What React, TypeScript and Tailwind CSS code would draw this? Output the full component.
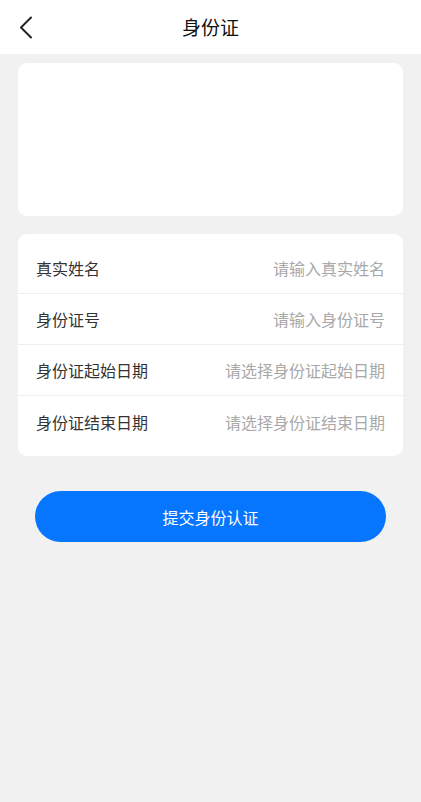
import React from 'react'

const ROWS: { label: string; placeholder: string }[] = [
  { label: '真实姓名', placeholder: '请输入真实姓名' },
  { label: '身份证号', placeholder: '请输入身份证号' },
  { label: '身份证起始日期', placeholder: '请选择身份证起始日期' },
  { label: '身份证结束日期', placeholder: '请选择身份证结束日期' },
]

const FONT = { fontFamily: '"Noto Sans CJK SC", "Noto Sans", sans-serif' }

export default function App() {
  return (
    <div className="min-h-[802px] w-full bg-[#f1f1f1]" style={FONT}>
      {/* Top bar */}
      <div className="relative flex h-[54px] items-center justify-center bg-white">
        <button className="absolute left-[16px] top-[14px] flex h-[26px] w-[20px] items-center justify-center" aria-label="返回">
          <svg width="14" height="23" viewBox="0 0 14 23" fill="none">
            <path d="M12 1.5L2 11.5L12 21.5" stroke="#222" strokeWidth="2" strokeLinecap="round" strokeLinejoin="round" />
          </svg>
        </button>
        <h1 className="text-[19px] font-normal text-[#111]">身份证</h1>
      </div>

      <div className="px-[18px] pt-[9px]">
        {/* Photo card */}
        <div className="h-[153px] rounded-[9px] bg-white" />

        {/* Form card */}
        <div className="mt-[18px] rounded-[9px] bg-white py-[9px]">
          {ROWS.map((r, i) => (
            <div
              key={r.label}
              className={`flex h-[51px] items-center justify-between px-[18px] text-[16px] ${i < ROWS.length - 1 ? 'border-b border-[#eeeeee]' : ''}`}
            >
              <span className="text-[#333]">{r.label}</span>
              <span className="text-[#a8a8a8]">{r.placeholder}</span>
            </div>
          ))}
        </div>

        <div className="px-[17px] pt-[35px]">
          <button className="flex h-[51px] w-full items-center justify-center rounded-full bg-[#0676ff] text-[16px] text-white">
            提交身份认证
          </button>
        </div>
      </div>
    </div>
  )
}
